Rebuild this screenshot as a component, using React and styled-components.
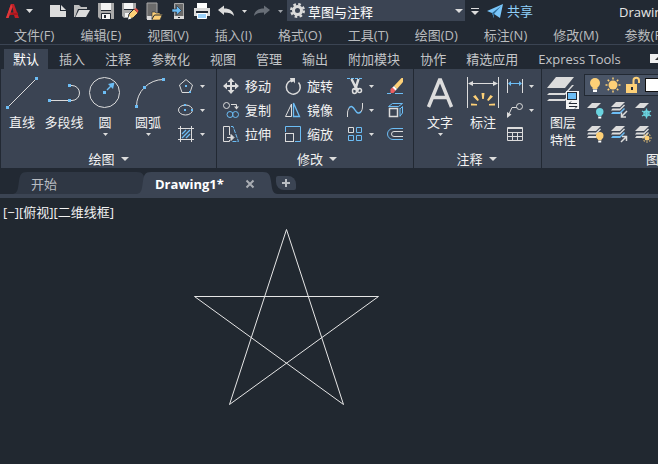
import React, { useState } from "react";
import styled, { createGlobalStyle, css } from "styled-components";

const dark = "#222933";
const panel = "#3b4453";
const light = "#dcdcdc";
const blue = "#6cbdf5";
const yellow = "#fdd077";
const teal = "#6ad3df";

const GlobalStyle = createGlobalStyle`
  * {
    box-sizing: border-box;
  }
  body {
    margin: 0;
    background: ${dark};
    color: #c8c8c8;
    font: 13px/18px "Open Sans", "Noto Sans CJK SC", sans-serif;
    overflow-x: hidden;
  }
  button, select {
    font: inherit;
    color: inherit;
    background: none;
    border: 0;
    padding: 0;
    margin: 0;
  }
`;

const Page = styled.div`
  min-height: 100vh;
  display: flex;
  flex-direction: column;
  overflow: hidden;
`;

const Svg = styled.svg`
  display: block;
  flex: none;
  fill: none;
  stroke: ${light};
  overflow: visible;
`;

const Icon = ({ w = 16, h = w, children }) => (
  <Svg width={w} height={h} viewBox={`0 0 ${w} ${h}`} aria-hidden="true">
    {children}
  </Svg>
);

const Caret = ({ w = 5, h = 3, color = light }) => (
  <Icon w={w} h={h}>
    <path d={`M0 0H${w}L${w / 2} ${h}z`} fill={color} stroke="none" />
  </Icon>
);

// grip squares drawn on the end points of a shape
const Dots = ({ at, s = 3 }) =>
  at.map(([x, y]) => (
    <rect key={`${x}-${y}`} x={x - s / 2} y={y - s / 2} width={s} height={s} fill={blue} stroke="none" />
  ));

/* ---------- title bar ---------- */

const TitleBar = styled.header`
  display: flex;
  align-items: center;
  height: 22px;
  padding-left: 4px;
  white-space: nowrap;
`;

const BarButton = styled.button`
  flex: none;
  display: flex;
  align-items: center;
  justify-content: center;
  height: 22px;
  width: ${({ $width }) => $width || 24}px;
`;

const AppButton = styled(BarButton)`
  width: 42px;
  gap: 6px;
  justify-content: flex-start;
`;

const Workspace = styled.label`
  position: relative;
  flex: none;
  width: 178px;
  height: 21px;
  margin: 0 1px;
  align-self: flex-start;
  color: #fff;

  select {
    appearance: none;
    width: 100%;
    height: 21px;
    padding: 2px 20px 0 21px;
    background: ${panel};
  }
  svg {
    position: absolute;
    pointer-events: none;
    top: 3px;
    left: 3px;
  }
  svg:last-child {
    top: 9px;
    left: auto;
    right: 2px;
  }
`;

const Share = styled.button`
  display: flex;
  align-items: center;
  gap: 4px;
  margin-left: 4px;
  color: #8fd0fb;
`;

const DocTitle = styled.span`
  margin-left: 86px;
  padding-top: 2px;
  color: #e6e6e6;
`;

const LogoIcon = () => (
  <Icon w={16}>
    <path d="M2 15L7 1H10L15 15H11L10 12H5.500L4.500 15z" fill="#bf2026" stroke="none" />
    <path d="M6.300 9.500L8.300 4L9.500 9.500z" fill={dark} stroke="none" />
    <path d="M2 15L7 1L8.500 4L4.500 15z" fill="#e2393c" stroke="none" />
    <path d="M4 11L14 9.500V12L9 12z" fill="#a5161d" stroke="none" />
  </Icon>
);

const NewIcon = () => (
  <Icon w={18}>
    <path d="M1 3H11V9H17V15H1z" fill={light} stroke="none" />
    <path d="M12 3L17 8H12z" fill={light} stroke="none" />
  </Icon>
);

const OpenIcon = () => (
  <Icon w={18}>
    <path d="M1 15V3H6L8 5H14V7H5L2 15z" fill="#bdbdbd" stroke="none" />
    <path d="M6 8H17L13 15H2.500z" fill={light} stroke="none" />
  </Icon>
);

const SaveIcon = () => (
  <Icon w={18}>
    <path d="M1 1H17V17H3L1 15z" fill="#a9a9a9" stroke="none" />
    <path d="M4 1H14V8H4zM5 12H13V17H5z" fill="#f4f4f4" stroke="none" />
    <path d="M4 8.500H14M4.500 17V11.500H13.500V17" stroke={dark} />
    <path d="M7 13H9V16H7z" fill={dark} stroke="none" />
  </Icon>
);

const SaveAsIcon = () => (
  <Icon w={18}>
    <path d="M1 1H15V12L10 16H3L1 14z" fill="#a9a9a9" stroke="none" />
    <path d="M3 1H12V7H3zM4 11H9V15H4z" fill="#f4f4f4" stroke="none" />
    <path d="M3 7.500H13" stroke={dark} />
    <path d="M7 17L8 12L13 7L17 11L12 16z" fill={yellow} stroke={dark} />
    <path d="M13 7L15 6L17.500 8.500L16.500 11z" fill="#e8574c" stroke="none" />
    <path d="M7 17.500L8 14L10.500 16.500z" fill="#fff" stroke="none" />
  </Icon>
);

const MobileOpenIcon = () => (
  <Icon w={18}>
    <path d="M2 1H12V17H2z" fill="#6b6b6b" stroke="#a9a9a9" />
    <path d="M2 14H8V18H2z" fill={light} stroke="none" />
    <path d="M7 18V10H10L11 11H15V12H17.500L15 18z" fill={yellow} stroke={dark} strokeWidth=".6" />
    <path d="M7 17L9.500 13H17" stroke={dark} />
  </Icon>
);

const MobileSaveIcon = () => (
  <Icon w={18}>
    <path d="M5.500 1.500H14.500V16.500H5.500z" fill="#6b6b6b" stroke="#a9a9a9" />
    <path d="M5 14H15V17H5z" fill={light} stroke="none" />
    <path d="M9 15H11V16H9z" fill={dark} stroke="none" />
    <path d="M3 7H7.500V3.500L12.500 8.500L7.500 13V10H3z" fill={blue} stroke={dark} strokeWidth=".6" />
  </Icon>
);

const PrintIcon = () => (
  <Icon w={18}>
    <path d="M4 1H14V6H4z" fill="#fff" stroke="none" />
    <path d="M1 6H17V14H1z" fill={light} stroke="none" />
    <path d="M3 9H15V11H3z" fill={dark} stroke="none" />
    <path d="M4.500 11.500H13.500V16.500H4.500z" fill="#9bd2fb" stroke="#fff" />
  </Icon>
);

const ArrowIcon = ({ color, flip }) => (
  <Icon w={18} h={12}>
    <path
      transform={flip ? "translate(18 0) scale(-1 1)" : undefined}
      d="M1 5L7 0.500V3.500C13 3.500 16.500 6 17 11C15 8.500 12 7.500 7 7.500V10z"
      fill={color}
      stroke="none"
    />
  </Icon>
);

const GearIcon = () => (
  <Icon w={15}>
    <circle cx="7.500" cy="7.500" r="4" stroke={light} strokeWidth="3" />
    <circle cx="7.500" cy="7.500" r="6.300" stroke={light} strokeWidth="2.400" strokeDasharray="2.600 2.348" />
  </Icon>
);

const PlaneIcon = () => (
  <Icon w={16}>
    <path d="M0 8L16 1L13 15L7 11V15L5 10z" fill="#79c6fa" stroke="none" />
    <path d="M5 10L14 3L7 11V15z" fill="#2d6c99" stroke="none" />
  </Icon>
);

/* ---------- menus and ribbon tabs ---------- */

const MenuBar = styled.nav`
  display: flex;
  gap: 26px;
  height: 23px;
  padding: 4px 0 0 14px;
  white-space: nowrap;
  border-bottom: 1px solid ${panel};
  color: #b9bbbe;

  button {
    flex: none;
    height: 18px;
  }
`;

const RibbonTabs = styled.div`
  display: flex;
  align-items: flex-end;
  gap: 2px;
  height: 24px;
  padding-left: 4px;
  white-space: nowrap;
`;

const RibbonTab = styled.button`
  flex: none;
  height: 20px;
  padding: 0 9px;
  color: #c3c5c8;
  ${({ $active }) =>
    $active &&
    css`
      color: #fff;
      background: ${panel};
    `}
`;

const Minimise = styled.button`
  flex: none;
  align-self: center;
  display: grid;
  place-items: center;
  width: 16px;
  height: 9px;
  margin: 3px 0 0 18px;
  background: #f0f0f0;
`;

/* ---------- ribbon ---------- */

const Ribbon = styled.main`
  display: flex;
  gap: 1px;
  padding-left: 1px;
  height: 99px;
`;

const PanelBox = styled.section`
  flex: ${({ $grow }) => ($grow ? "1 0" : "0 0")} ${({ $width }) => $width}px;
  display: flex;
  flex-direction: column;
  padding: 5px 0 0 ${({ $pad }) => $pad || 0}px;
  background: ${panel};
  color: #f2f2f2;
`;

const Tools = styled.div`
  display: grid;
  grid-template-columns: ${({ $columns }) => $columns};
  height: 72px;
  overflow: hidden;
`;

const PanelTitle = styled.button`
  display: flex;
  flex: 1;
  align-items: center;
  justify-content: center;
  gap: 6px;
  padding: 4px 2px 0 0;
`;

const BigTool = styled.button`
  display: flex;
  flex-direction: column;
  align-items: center;
  justify-content: flex-start;
  padding-top: 2px;
  white-space: nowrap;

  span {
    margin: 5px 0 2px;
  }
`;

const Stack = styled.div`
  display: grid;
  grid-auto-rows: 24px;
  padding-left: ${({ $pad }) => $pad || 0}px;
`;

const SmallTool = styled.button`
  display: flex;
  align-items: center;
  gap: 6px;
  white-space: nowrap;
`;

const Panel = ({ title, width, columns, pad, grow, children }) => (
  <PanelBox $width={width} $pad={pad} $grow={grow} aria-label={title}>
    <Tools $columns={columns}>{children}</Tools>
    <PanelTitle>
      {title}
      <Caret w={8} h={4} />
    </PanelTitle>
  </PanelBox>
);

const Big = ({ icon, label, menu }) => (
  <BigTool>
    {icon}
    <span>{label}</span>
    {menu && <Caret />}
  </BigTool>
);

const Small = ({ icon, label, name, menu }) => (
  <SmallTool aria-label={label ? undefined : name}>
    {icon}
    {label}
    {menu && <Caret />}
  </SmallTool>
);

/* draw */

const LineIcon = () => (
  <Icon w={32}>
    <path d="M1.500 31.500L30.500 2.500" />
    <Dots at={[[1.5, 31.5], [30.5, 2.5]]} />
  </Icon>
);

const PolylineIcon = () => (
  <Icon w={32}>
    <path d="M1.500 24.500H21.500M21.500 9.500H24A7.500 7.500 0 0 1 24 24.500H21.500" />
    <Dots at={[[1.5, 24.5], [21.5, 24.5], [21.5, 9.5]]} />
  </Icon>
);

const CircleIcon = () => (
  <Icon w={32}>
    <circle cx="15.500" cy="16.500" r="15" />
    <path d="M18 14L23 9" stroke={blue} strokeWidth="1.500" />
    <path d="M19 8L25.500 6.500L24 13z" fill={blue} stroke="none" />
    <Dots at={[[15.5, 16.5]]} />
  </Icon>
);

const ArcIcon = () => (
  <Icon w={32}>
    <path d="M4.500 30.500A27 27 0 0 1 31.500 3.500" />
    <Dots at={[[4.5, 30.5], [12.5, 11.5], [31.5, 3.5]]} />
  </Icon>
);

const PolygonIcon = () => (
  <Icon>
    <path d="M8 1.500L14.500 7L12 14.500H4L1.500 7z" />
    <Dots s={2} at={[[8, 8], [12, 14]]} />
  </Icon>
);

const EllipseIcon = () => (
  <Icon>
    <ellipse cx="7.500" cy="8" rx="7" ry="5" />
    <Dots s={2} at={[[7, 8], [7, 3], [14, 8]]} />
  </Icon>
);

const HatchIcon = () => (
  <Icon>
    <path d="M2.500 0V16M13.500 0V16M0 2.500H16M0 13.500H16" />
    <path d="M4 8L8 4M4 12L12 4M8 12L12 8" stroke={blue} strokeWidth="1.300" />
  </Icon>
);

/* modify */

const MoveIcon = () => (
  <Icon>
    <path d="M8 2V14M2 8H14" strokeWidth="2" />
    <path
      d="M8 0L11.500 4H4.500zM8 16L11.500 12H4.500zM0 8L4 4.500V11.500zM16 8L12 4.500V11.500z"
      fill={light}
      stroke="none"
    />
  </Icon>
);

const RotateIcon = () => (
  <Icon>
    <path d="M13.500 4.500A7 7 0 1 1 6 2.500" strokeWidth="1.500" />
    <path d="M5 0H10V5.500L8.500 3.500L6 4.500z" fill={light} stroke="none" />
  </Icon>
);

const ScissorsIcon = () => (
  <Icon>
    <path d="M0 0.500H16" stroke={blue} strokeDasharray="3 1" />
    <path d="M4.500 1L9 10L12 12M11.500 1L9 9L7.500 12" strokeWidth="2.500" />
    <ellipse cx="7.500" cy="13" rx="2" ry="2.500" strokeWidth="1.500" />
    <circle cx="12.500" cy="12.500" r="2" strokeWidth="1.500" />
  </Icon>
);

const EraserIcon = () => (
  <Icon>
    <path d="M0 15.500H4M8 15.500H16" stroke={blue} />
    <path d="M7 8L14.500 0H16V4L10 11z" fill={yellow} stroke="none" />
    <path d="M7 8L10 11L8 13L5 10z" fill="#fff" stroke="none" />
    <path d="M5.500 9.500L8.500 12.500L6.500 15H3.500V11z" fill="#ec5f62" stroke="none" />
  </Icon>
);

const CopyIcon = () => (
  <Icon>
    <circle cx="3.500" cy="3.500" r="3" />
    <path d="M8 2.500H13.500V6" />
    <path d="M11 4.500H16L13.500 7.500z" fill={light} stroke="none" />
    <circle cx="7" cy="12.500" r="3" stroke={blue} />
    <circle cx="12.500" cy="12.500" r="3" stroke={blue} />
  </Icon>
);

const MirrorIcon = () => (
  <Icon>
    <path d="M6.500 2V14.500H0.500z" />
    <path d="M8.500 1V14.500H14.500z" stroke={blue} strokeWidth="1.300" />
  </Icon>
);

const SplineIcon = () => (
  <Icon>
    <path d="M0.500 15V12C0.500 9 1 7.500 2.500 5.500M15.500 1V4C15.500 7 15 8.500 13.500 10.500" />
    <path d="M2 6C4 3.500 6 4.500 8 8C10 11.500 12 12 14 9.500" stroke={blue} strokeWidth="1.500" />
  </Icon>
);

const ExplodeIcon = () => (
  <Icon>
    <rect x="2.500" y="6.500" width="8" height="8" strokeWidth="1.500" />
    <path d="M1.500 4.500L5.500 1.500H15.500L11.500 4.500zM13 7L15.500 4.500V11L13 14M13 6V14.500" stroke={blue} />
  </Icon>
);

const StretchIcon = () => (
  <Icon>
    <path d="M6.500 9V0.500H0.500V15.500H6.500V14" />
    <path d="M4 11.500H9" />
    <path d="M8 8.500V14.500L11 11.500z" fill={light} />
    <path d="M8 0.500H10L15.500 15.500H9" stroke={blue} strokeDasharray="4 1" />
  </Icon>
);

const ScaleIcon = () => (
  <Icon>
    <path d="M0.500 6V0.500H15.500V15.500H10" stroke={blue} />
    <rect x="0.500" y="7.500" width="8" height="8" />
  </Icon>
);

const ArrayIcon = () => (
  <Icon>
    <path d="M1.500 1.500H6.500V6.500H1.500z" />
    <path d="M9.500 1.500H14.500V6.500H9.500zM1.500 9.500H6.500V14.500H1.500zM9.500 9.500H14.500V14.500H9.500z" stroke={blue} />
  </Icon>
);

const OffsetIcon = () => (
  <Icon>
    <path d="M16 2.500H6A5.500 5.500 0 0 0 6 13.500H16" stroke={blue} />
    <path d="M16 5.500H7A2.500 2.500 0 0 0 7 10.500H16" />
  </Icon>
);

/* annotate */

const TextIcon = () => (
  <Icon w={32}>
    <path d="M4.500 31L15.500 4H16.500L27.500 31M9 21.500H23" strokeWidth="3.500" />
  </Icon>
);

const DimensionIcon = () => (
  <Icon w={32}>
    <path d="M0.500 1V32M31.500 1V32M2 7.500H30" />
    <path d="M1 7.500L6 5V10zM31 7.500L26 5V10z" fill={light} stroke="none" />
    <path
      d="M14.500 17H17.500L16.800 23H15.200zM6 20.500L8.500 19L12 24L10.500 25zM26 20.500L23.500 19L20 24L21.500 25zM4 27.500L10 28V29.500H4zM28 27.500L22 28V29.500H28z"
      fill={yellow}
      stroke="none"
    />
  </Icon>
);

const LinearIcon = () => (
  <Icon>
    <path d="M0.500 1V15M15.500 1V15" />
    <path d="M2 5.500H14" stroke={blue} />
    <path d="M1 5.500L4 3V8zM15 5.500L12 3V8z" fill={blue} stroke="none" />
  </Icon>
);

const LeaderIcon = () => (
  <Icon>
    <circle cx="12.500" cy="4.500" r="3" />
    <path d="M9.500 5.500H5L1.500 13" />
    <path d="M0 16V10L4.500 12.500z" fill={light} stroke="none" />
  </Icon>
);

const TableIcon = () => (
  <Icon>
    <path d="M0.500 1.500H15.500V14.500H0.500zM0 2.500H16M0 6.500H16M0 10.500H16M5.500 6V14M10.500 6V14" />
  </Icon>
);

/* layers */

const LayersIcon = () => (
  <Icon w={32}>
    <g stroke="none" fill={light}>
      <path d="M9 1H27L18 12H0z" />
      <path d="M2 17H18L25 9H27L18 19H0z" />
      <path d="M2 23H18L25 15H27L18 25H0z" />
    </g>
    <rect x="19" y="15" width="13" height="18" fill="#f4f4f4" stroke="none" />
    <rect x="20.500" y="16.500" width="9" height="7" fill={blue} stroke={dark} />
    <path d="M22 27.500H30M22 30.500H30M24 25.500L22 27.500M28 32.500L30 30.500" stroke={dark} />
  </Icon>
);

const Bulb = ({ x, y, s = 1, color = yellow }) => (
  <g transform={`translate(${x} ${y}) scale(${s})`} stroke="none">
    <circle cx="5" cy="5" r="5" fill={color} />
    <path d="M2.500 8H7.500V11H2.500z" fill={color} />
    <path d="M3 11.500H7V14H3z" fill="#fff" />
  </g>
);

const Sun = ({ x, y, r, ray }) => (
  <g transform={`translate(${x} ${y})`}>
    <circle r={r} fill={yellow} stroke="none" />
    {[0, 45, 90, 135, 180, 225, 270, 315].map((a) => (
      <path key={a} d={`M0 ${r + 1}V${r + 1 + ray}`} stroke={yellow} strokeWidth="1.500" transform={`rotate(${a})`} />
    ))}
  </g>
);

const SmallSheets = ({ last }) => (
  <g stroke="none" fill={light}>
    <path d="M5 0H14L9 5H0z" />
    <path d="M1.500 6.500H9L13 2.500L14 3.500L9 8.500H0z" />
    <path d="M1.500 10H9L13 6L14 7L9 12H0z" fill={last || light} />
  </g>
);

const LayerOffIcon = () => (
  <Icon>
    <path d="M5 1H14L9 6H0z" fill={light} stroke="none" />
    <Bulb x={9} y={6} s={0.75} color={teal} />
  </Icon>
);

const LayerIsolateIcon = () => (
  <Icon>
    <SmallSheets last={blue} />
    <path d="M16 9L11 14M10.500 10.500V15H15" strokeWidth="1.500" />
  </Icon>
);

const LayerFreezeIcon = () => (
  <Icon>
    <path d="M5 1H14L9 6H0z" fill={light} stroke="none" />
    <g stroke={teal} strokeWidth="1.300">
      <path d="M11.500 6.500V16.500M7 9L16 14M7 14L16 9" />
      <circle cx="11.500" cy="11.500" r="2.500" />
    </g>
  </Icon>
);

const LayerOnIcon = () => (
  <Icon>
    <SmallSheets />
    <Bulb x={9} y={6} s={0.75} />
  </Icon>
);

const LayerUnisolateIcon = () => (
  <Icon>
    <SmallSheets last={blue} />
    <path d="M10 16L15 11M11 10.500H15.500V15" strokeWidth="1.500" />
  </Icon>
);

const LayerThawIcon = () => (
  <Icon>
    <SmallSheets />
    <Sun x={12} y={12} r={2.5} ray={1} />
  </Icon>
);

const LayerStateIcon = () => (
  <Icon w={50} h={16}>
    <Bulb x={0} y={1} />
    <Sun x={23} y={8} r={4.5} ray={2} />
    <path d="M36 7H47V16H36z" fill={yellow} stroke="none" />
    <path d="M43.500 7V3.500A2.500 2.500 0 0 1 49 3.500V6" stroke={yellow} strokeWidth="2" />
    <path d="M41 10H43V13H41z" fill={dark} stroke="none" />
  </Icon>
);

const LayerSide = styled.div`
  display: grid;
  grid-template-rows: 24px 24px 24px;
`;

const LayerCombo = styled.button`
  display: flex;
  align-items: center;
  gap: 5px;
  height: 22px;
  margin: 0 4px 0 0;
  padding: 0 6px 0 5px;
  background: #4a5567;
  border: 1px solid ${dark};
`;

const Swatch = styled.span`
  width: 14px;
  height: 14px;
  background: #fff;
  border: 1px solid #111;
`;

const IconRow = styled.div`
  display: flex;
  align-items: center;
  gap: 8px;
  padding-left: 3px;
`;

/* ---------- documents ---------- */

const DocTabs = styled.div`
  display: flex;
  align-items: flex-end;
  height: 30px;
  padding-left: 14px;
  border-bottom: 4px solid ${panel};
`;

const TabFrame = styled.div`
  display: flex;
  height: 22px;
  color: ${({ $active }) => ($active ? "#fff" : "#b9bdc3")};
  font-weight: ${({ $active }) => ($active ? 700 : 400)};
  margin-left: ${({ $active }) => ($active ? -12 : 0)}px;
`;

const TabBody = styled.div`
  display: flex;
  align-items: center;
  justify-content: space-between;
  width: ${({ $width }) => $width}px;
  padding: 2px 9px 0 4px;
  background: ${({ $fill }) => $fill};

  button {
    height: 18px;
  }
`;

const TabEdge = ({ fill, right }) => (
  <Icon w={13} h={22}>
    <path
      transform={right ? "translate(13 0) scale(-1 1)" : undefined}
      d="M13 0C7 0 6 3 5 9C4 16 4 22 -2 22H13z"
      fill={fill}
      stroke="none"
    />
  </Icon>
);

const AddTab = styled.button`
  align-self: center;
  display: grid;
  place-items: center;
  width: 20px;
  height: 14px;
  margin: 4px 0 0;
  border-radius: 2px 8px 2px 8px;
  background: ${panel};
`;

const DocTab = ({ label, width, active, closable }) => {
  const fill = active ? panel : "#2f3744";
  return (
    <TabFrame $active={active}>
      <TabEdge fill={fill} />
      <TabBody $width={width} $fill={fill}>
        <button>{label}</button>
        {closable && (
          <button aria-label="关闭">
            <Icon w={8}>
              <path d="M0.500 0.500L7.500 7.500M7.500 0.500L0.500 7.500" strokeWidth="2" stroke="#a9adb3" />
            </Icon>
          </button>
        )}
      </TabBody>
      <TabEdge fill={fill} right />
    </TabFrame>
  );
};

const Canvas = styled.div`
  position: relative;
  flex: 1;
  min-height: 220px;
  padding: 5px 3px;
  background: #212830;
`;

const ViewLabel = styled.div`
  color: #f2f2f2;
`;

const Drawing = styled.svg`
  position: absolute;
  inset: 0;
  width: 100%;
  height: 100%;
  fill: none;
  stroke: #e6e6e6;
  pointer-events: none;
`;

const menus = [
  "文件(F)", "编辑(E)", "视图(V)", "插入(I)", "格式(O)",
  "工具(T)", "绘图(D)", "标注(N)", "修改(M)", "参数(P)",
];

const tabs = [
  "默认", "插入", "注释", "参数化", "视图", "管理",
  "输出", "附加模块", "协作", "精选应用", "Express Tools",
];

const quickTools = [
  ["新建", NewIcon],
  ["打开", OpenIcon],
  ["保存", SaveIcon],
  ["另存为", SaveAsIcon],
  ["从移动设备打开", MobileOpenIcon],
  ["保存到移动设备", MobileSaveIcon],
  ["打印", PrintIcon],
];

const App = () => {
  const [tab, setTab] = useState("默认");

  return (
    <Page>
      <GlobalStyle />
      <TitleBar>
        <AppButton aria-label="应用程序菜单">
          <LogoIcon />
          <Caret w={7} h={4} />
        </AppButton>
        {quickTools.map(([name, QuickIcon]) => (
          <BarButton key={name} aria-label={name}>
            <QuickIcon />
          </BarButton>
        ))}
        <BarButton aria-label="放弃">
          <ArrowIcon color={light} />
        </BarButton>
        <BarButton $width={12} aria-label="放弃列表">
          <Caret />
        </BarButton>
        <BarButton aria-label="重做">
          <ArrowIcon color="#686e77" flip />
        </BarButton>
        <BarButton $width={12} aria-label="重做列表">
          <Caret color="#a0a4aa" />
        </BarButton>
        <Workspace>
          <select aria-label="工作空间">
            <option>草图与注释</option>
          </select>
          <GearIcon />
          <Caret w={8} h={4} />
        </Workspace>
        <BarButton $width={17} aria-label="自定义快速访问工具栏">
          <Icon w={8} h={7}>
            <path d="M0 0.500H8" />
            <path d="M0 3H8L4 7z" fill={light} stroke="none" />
          </Icon>
        </BarButton>
        <Share>
          <PlaneIcon />
          共享
        </Share>
        <DocTitle>Drawing1.dwg</DocTitle>
      </TitleBar>

      <MenuBar>
        {menus.map((m) => (
          <button key={m}>{m}</button>
        ))}
      </MenuBar>

      <RibbonTabs>
        {tabs.map((t) => (
          <RibbonTab key={t} $active={t === tab} onClick={() => setTab(t)}>
            {t}
          </RibbonTab>
        ))}
        <Minimise aria-label="最小化">
          <Icon w={6} h={3}>
            <path d="M0 3H6L3 0z" fill="#333" stroke="none" />
          </Icon>
        </Minimise>
      </RibbonTabs>

      <Ribbon>
        <Panel title="绘图" width={215} columns="38px 46px 36px 50px 1fr" pad={2}>
          <Big icon={<LineIcon />} label="直线" />
          <Big icon={<PolylineIcon />} label="多段线" />
          <Big icon={<CircleIcon />} label="圆" menu />
          <Big icon={<ArcIcon />} label="圆弧" menu />
          <Stack $pad={5}>
            <Small icon={<PolygonIcon />} name="多边形" menu />
            <Small icon={<EllipseIcon />} name="椭圆" menu />
            <Small icon={<HatchIcon />} name="图案填充" menu />
          </Stack>
        </Panel>

        <Panel title="修改" width={196} columns="62px 62px 40px 1fr" pad={6}>
          <Stack>
            <Small icon={<MoveIcon />} label="移动" />
            <Small icon={<CopyIcon />} label="复制" />
            <Small icon={<StretchIcon />} label="拉伸" />
          </Stack>
          <Stack>
            <Small icon={<RotateIcon />} label="旋转" />
            <Small icon={<MirrorIcon />} label="镜像" />
            <Small icon={<ScaleIcon />} label="缩放" />
          </Stack>
          <Stack>
            <Small icon={<ScissorsIcon />} name="修剪" menu />
            <Small icon={<SplineIcon />} name="光顺曲线" menu />
            <Small icon={<ArrayIcon />} name="阵列" menu />
          </Stack>
          <Stack>
            <Small icon={<EraserIcon />} name="删除" />
            <Small icon={<ExplodeIcon />} name="分解" />
            <Small icon={<OffsetIcon />} name="偏移" />
          </Stack>
        </Panel>

        <Panel title="注释" width={127} columns="52px 34px 1fr">
          <Big icon={<TextIcon />} label="文字" menu />
          <Big icon={<DimensionIcon />} label="标注" />
          <Stack $pad={7}>
            <Small icon={<LinearIcon />} name="线性" menu />
            <Small icon={<LeaderIcon />} name="引线" menu />
            <Small icon={<TableIcon />} name="表格" />
          </Stack>
        </Panel>

        <Panel title="图层" width={250} columns="42px 1fr" grow>
          <Big
            icon={<LayersIcon />}
            label={
              <>
                图层
                <br />
                特性
              </>
            }
          />
          <LayerSide>
            <LayerCombo aria-label="图层" aria-haspopup="listbox">
              <LayerStateIcon />
              <Swatch />
            </LayerCombo>
            <IconRow>
              <Small icon={<LayerOffIcon />} name="关" />
              <Small icon={<LayerIsolateIcon />} name="隔离" />
              <Small icon={<LayerFreezeIcon />} name="冻结" />
            </IconRow>
            <IconRow>
              <Small icon={<LayerOnIcon />} name="打开所有图层" />
              <Small icon={<LayerUnisolateIcon />} name="取消隔离" />
              <Small icon={<LayerThawIcon />} name="解冻所有图层" />
            </IconRow>
          </LayerSide>
        </Panel>
      </Ribbon>

      <DocTabs>
        <DocTab label="开始" width={110} />
        <DocTab label="Drawing1*" width={112} active closable />
        <AddTab aria-label="新图形">
          <Icon w={8}>
            <path d="M4 0V8M0 4H8" strokeWidth="2" stroke="#b9bdc3" />
          </Icon>
        </AddTab>
      </DocTabs>

      <Canvas>
        <ViewLabel>[−][俯视][二维线框]</ViewLabel>
        <Drawing aria-label="五角星">
          <path d="M286.500 31.500L343.500 206.500L194.500 98.500H378.500L229.500 206.500z" />
        </Drawing>
      </Canvas>
    </Page>
  );
};

export default App;
